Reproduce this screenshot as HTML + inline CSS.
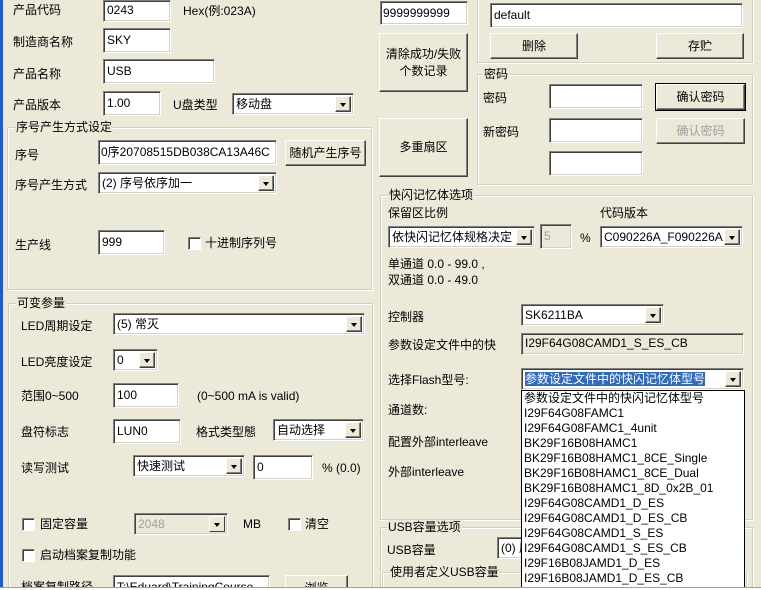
<!DOCTYPE html>
<html style="width:761px;height:590px;overflow:hidden"><head><meta charset="utf-8"><style>
*{margin:0;padding:0;box-sizing:border-box}
body{width:761px;height:590px;overflow:hidden;background:#ECE9D8;position:relative;font-family:"Liberation Sans","Noto Sans CJK SC",sans-serif;font-size:12px;color:#000}
.a{position:absolute;white-space:nowrap;line-height:14px}
.in{position:absolute;background:#fff;border-top:1px solid #808080;border-left:1px solid #808080;border-right:1px solid #fff;border-bottom:1px solid #fff;box-shadow:inset 1px 1px 0 #404040,inset -1px -1px 0 #d4d0c8;padding:3px 3px;line-height:16px;white-space:nowrap;overflow:hidden}
.sel{position:absolute;background:#fff;border-top:1px solid #808080;border-left:1px solid #808080;border-right:1px solid #fff;border-bottom:1px solid #fff;box-shadow:inset 1px 1px 0 #404040,inset -1px -1px 0 #d4d0c8;padding:2px 3px;line-height:16px;white-space:nowrap;overflow:hidden}
.sel .ar{position:absolute;right:2px;top:2px;width:16px;height:16px;background:#ECE9D8;border:1px solid;border-color:#fff #404040 #404040 #fff;box-shadow:inset -1px -1px 0 #808080}
.sel .ar:after{content:"";position:absolute;left:4px;top:6px;border-left:3.5px solid transparent;border-right:3.5px solid transparent;border-top:4px solid #000}
.btn{position:absolute;background:#ECE9D8;border:1px solid;border-color:#fff #404040 #404040 #fff;box-shadow:inset -1px -1px 0 #808080;text-align:center;display:flex;align-items:center;justify-content:center;line-height:17px}
.grp{position:absolute;border:1px solid #d0d0bf;box-shadow:inset 1px 1px 0 #fff,1px 1px 0 #fff}
.grp .t{position:absolute;top:-8px;left:6px;background:#ECE9D8;padding:0 1px;line-height:14px}
.cb{position:absolute;width:13px;height:13px;background:#fff;border:1px solid;border-color:#808080 #fff #fff #808080;box-shadow:inset 1px 1px 0 #404040}
.dl div{height:15px;line-height:15px;padding-left:2px}
.clip{position:absolute;left:0;top:0;width:761px;height:590px;overflow:hidden}
</style></head><body><div class="clip">
<div style="position:absolute;left:0;top:0;width:3px;height:590px;background:#1e5bd8"></div>

<div class="a" style="left:13px;top:3px">产品代码</div>
<div class="in" style="left:103px;top:0;width:68px;height:22px;padding-top:1px">0243</div>
<div class="a" style="left:183px;top:4px">Hex(例:023A)</div>
<div class="a" style="left:13px;top:35px">制造商名称</div>
<div class="in" style="left:103px;top:28px;width:68px;height:25px">SKY</div>
<div class="a" style="left:13px;top:67px">产品名称</div>
<div class="in" style="left:103px;top:59px;width:112px;height:25px">USB</div>
<div class="a" style="left:13px;top:98px">产品版本</div>
<div class="in" style="left:103px;top:91px;width:58px;height:25px">1.00</div>
<div class="a" style="left:173px;top:98px">U盘类型</div>
<div class="sel" style="left:232px;top:93px;width:122px;height:22px">移动盘<span class="ar"></span></div>

<div class="grp" style="left:7px;top:127px;width:365px;height:163px"><span class="t" style="left:7px">序号产生方式设定</span></div>
<div class="a" style="left:15px;top:148px">序号</div>
<div class="in" style="left:98px;top:140px;width:179px;height:25px;padding-left:2px">0序20708515DB038CA13A46C</div>
<div class="btn" style="left:285px;top:140px;width:81px;height:26px">随机产生序号</div>
<div class="a" style="left:15px;top:178px">序号产生方式</div>
<div class="sel" style="left:98px;top:172px;width:179px;height:22px">(2) 序号依序加一<span class="ar"></span></div>
<div class="a" style="left:15px;top:238px">生产线</div>
<div class="in" style="left:98px;top:230px;width:67px;height:25px">999</div>
<div class="cb" style="left:188px;top:237px"></div>
<div class="a" style="left:205px;top:236px">十进制序列号</div>

<div class="grp" style="left:8px;top:303px;width:365px;height:300px"><span class="t" style="left:7px">可变参量</span></div>
<div class="a" style="left:21px;top:319px">LED周期设定</div>
<div class="sel" style="left:113px;top:313px;width:252px;height:22px">(5) 常灭<span class="ar"></span></div>
<div class="a" style="left:21px;top:355px">LED亮度设定</div>
<div class="sel" style="left:113px;top:349px;width:45px;height:22px">0<span class="ar"></span></div>
<div class="a" style="left:21px;top:389px">范围0~500</div>
<div class="in" style="left:113px;top:383px;width:66px;height:25px">100</div>
<div class="a" style="left:197px;top:389px">(0~500 mA is valid)</div>
<div class="a" style="left:21px;top:425px">盘符标志</div>
<div class="in" style="left:113px;top:419px;width:68px;height:25px">LUN0</div>
<div class="a" style="left:196px;top:425px">格式类型態</div>
<div class="sel" style="left:273px;top:419px;width:91px;height:22px">自动选择<span class="ar"></span></div>
<div class="a" style="left:21px;top:461px">读写测试</div>
<div class="sel" style="left:133px;top:455px;width:112px;height:22px">快速测试<span class="ar"></span></div>
<div class="in" style="left:253px;top:455px;width:60px;height:25px">0</div>
<div class="a" style="left:322px;top:461px">% (0.0)</div>
<div class="cb" style="left:22px;top:518px"></div>
<div class="a" style="left:40px;top:517px">固定容量</div>
<div class="sel" style="left:134px;top:513px;width:94px;height:22px;background:#ECE9D8;color:#a0a0a0">2048<span class="ar" style="box-shadow:none"></span></div>
<div class="a" style="left:243px;top:517px">MB</div>
<div class="cb" style="left:288px;top:518px"></div>
<div class="a" style="left:305px;top:517px">清空</div>
<div class="cb" style="left:22px;top:549px"></div>
<div class="a" style="left:40px;top:548px">启动档案复制功能</div>
<div class="a" style="left:21px;top:580px">档案复制路径</div>
<div class="in" style="left:113px;top:575px;width:157px;height:25px">T:\Eduard\TrainingCourse</div>
<div class="btn" style="left:285px;top:575px;width:63px;height:26px">浏览</div>

<div class="in" style="left:380px;top:1px;width:88px;height:24px;padding-left:2px">9999999999</div>
<div class="btn" style="left:379px;top:33px;width:89px;height:59px">清除成功/失败<br>个数记录</div>
<div class="btn" style="left:379px;top:118px;width:89px;height:59px">多重扇区</div>

<div class="grp" style="left:477px;top:-10px;width:276px;height:73px"></div>
<div class="in" style="left:490px;top:3px;width:253px;height:25px">default</div>
<div class="btn" style="left:490px;top:33px;width:88px;height:26px">删除</div>
<div class="btn" style="left:656px;top:33px;width:88px;height:26px">存贮</div>

<div class="grp" style="left:477px;top:74px;width:276px;height:111px"><span class="t" style="left:5px">密码</span></div>
<div class="a" style="left:483px;top:91px">密码</div>
<div class="in" style="left:549px;top:84px;width:94px;height:25px"></div>
<div class="btn" style="left:656px;top:84px;width:89px;height:26px;outline:1px solid #000">确认密码</div>
<div class="a" style="left:483px;top:125px">新密码</div>
<div class="in" style="left:549px;top:118px;width:94px;height:25px"></div>
<div class="btn" style="left:656px;top:118px;width:89px;height:26px;color:#a0a0a0">确认密码</div>
<div class="in" style="left:549px;top:151px;width:94px;height:25px"></div>

<div class="grp" style="left:380px;top:195px;width:373px;height:325px"><span class="t" style="left:7px">快闪记忆体选项</span></div>
<div class="a" style="left:388px;top:206px">保留区比例</div>
<div class="a" style="left:600px;top:206px">代码版本</div>
<div class="sel" style="left:388px;top:226px;width:147px;height:22px">依快闪记忆体规格决定<span class="ar"></span></div>
<div class="in" style="left:540px;top:224px;width:32px;height:25px;background:#ECE9D8;color:#a0a0a0">5</div>
<div class="a" style="left:580px;top:231px">%</div>
<div class="sel" style="left:600px;top:226px;width:143px;height:22px">C090226A_F090226A<span class="ar"></span></div>
<div class="a" style="left:388px;top:257px">单通道 0.0 - 99.0 ,</div>
<div class="a" style="left:388px;top:273px">双通道 0.0 - 49.0</div>
<div class="a" style="left:388px;top:310px">控制器</div>
<div class="sel" style="left:521px;top:304px;width:143px;height:22px">SK6211BA<span class="ar"></span></div>
<div class="a" style="left:388px;top:338px">参数设定文件中的快</div>
<div class="in" style="left:521px;top:333px;width:223px;height:22px;background:#ECE9D8;padding-top:1px">I29F64G08CAMD1_S_ES_CB</div>
<div class="a" style="left:388px;top:373px">选择Flash型号:</div>
<div class="sel" style="left:521px;top:368px;width:223px;height:22px"><span style="background:#316AC5;color:#fff">参数设定文件中的快闪记忆体型号</span><span class="ar"></span></div>
<div class="a" style="left:388px;top:403px">通道数:</div>
<div class="a" style="left:388px;top:435px">配置外部interleave</div>
<div class="a" style="left:388px;top:465px">外部interleave</div>

<div class="grp" style="left:380px;top:527px;width:373px;height:80px"><span class="t" style="left:6px">USB容量选项</span></div>
<div class="a" style="left:387px;top:543px">USB容量</div>
<div class="sel" style="left:497px;top:537px;width:246px;height:22px">(0) 原始<span class="ar"></span></div>
<div class="grp" style="left:382px;top:572px;width:365px;height:40px"><span class="t" style="left:6px">使用者定义USB容量</span></div>

<div class="dl" style="position:absolute;left:521px;top:390px;width:224px;height:200px;background:#fff;border:1px solid #000;overflow:hidden">
<div>参数设定文件中的快闪记忆体型号</div><div>I29F64G08FAMC1</div><div>I29F64G08FAMC1_4unit</div><div>BK29F16B08HAMC1</div><div>BK29F16B08HAMC1_8CE_Single</div><div>BK29F16B08HAMC1_8CE_Dual</div><div>BK29F16B08HAMC1_8D_0x2B_01</div><div>I29F64G08CAMD1_D_ES</div><div>I29F64G08CAMD1_D_ES_CB</div><div>I29F64G08CAMD1_S_ES</div><div>I29F64G08CAMD1_S_ES_CB</div><div>I29F16B08JAMD1_D_ES</div><div>I29F16B08JAMD1_D_ES_CB</div>
</div>
<div style="position:absolute;left:0;top:587px;width:761px;height:1px;background:#a0a0a0"></div>
<div style="position:absolute;left:0;top:588px;width:761px;height:2px;background:#fff"></div>
</div></body></html>
